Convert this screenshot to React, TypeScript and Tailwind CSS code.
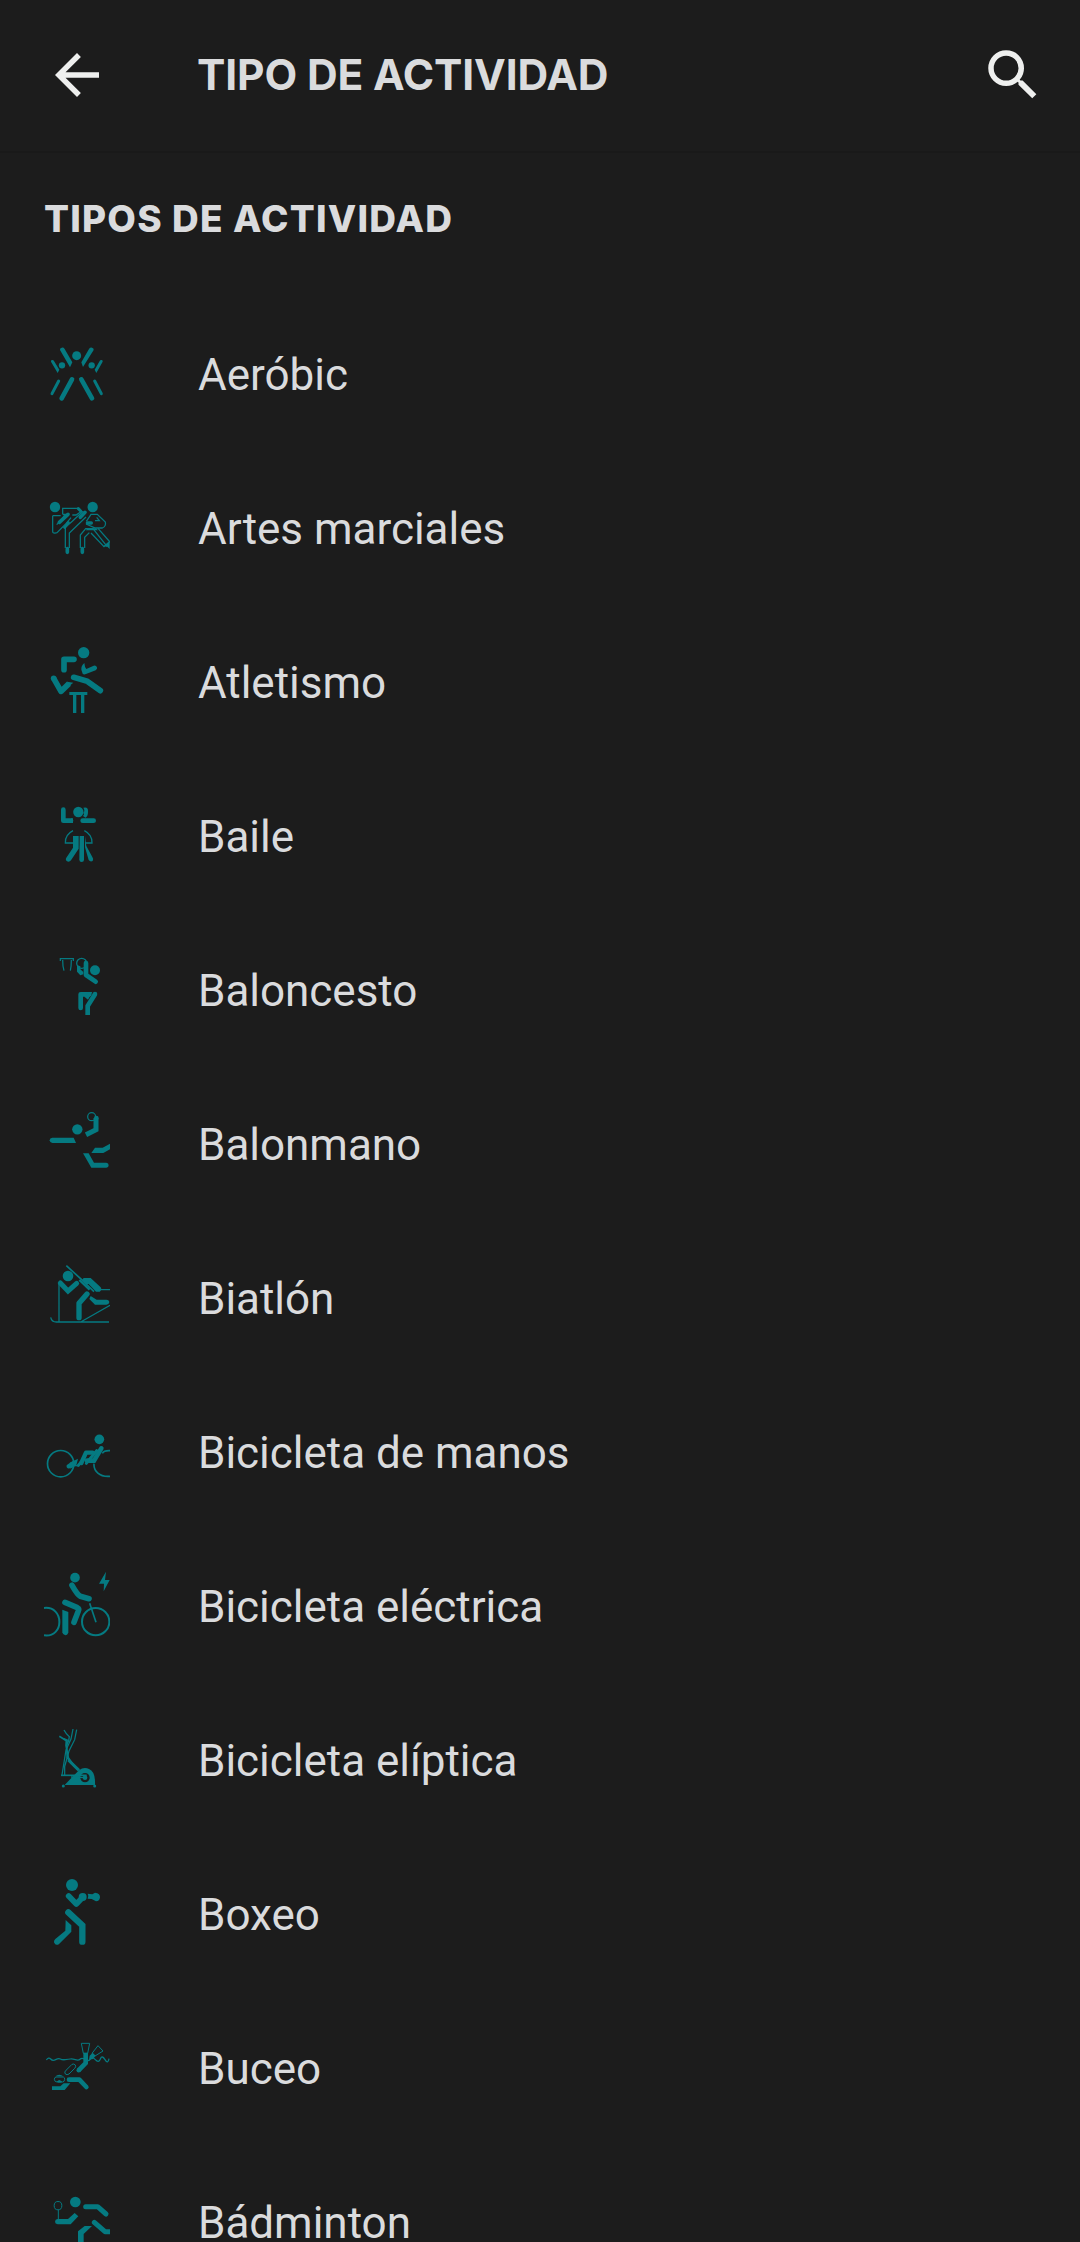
import type { ReactNode } from "react";

type Activity = { name: string; viewBox: string; icon: ReactNode };

const thick = { fill: "none", stroke: "currentColor", strokeWidth: 14, strokeLinecap: "round", strokeLinejoin: "round" } as const;
const limb = { ...thick, strokeWidth: 17 } as const;
const thin = { fill: "none", stroke: "currentColor", strokeWidth: 3.8 } as const;
const butt = { ...thick, strokeLinecap: "butt", strokeLinejoin: "miter" } as const;

const activities: Activity[] = [
  {
    name: "Aeróbic",
    viewBox: "42 42 198 198",
    icon: (
      <>
        <circle cx="140" cy="92" r="13.5" />
        <circle cx="96" cy="121" r="9.5" />
        <circle cx="185" cy="121" r="9.5" />
        <path d="M90 75Q89 69 95 68Q101 67 104 72L127 112L120 127Z" />
        <path d="M191 75Q192 69 186 68Q180 67 177 72L154 112L159 126Z" />
        <path d="M63 110Q62 106 66 105Q70 104 72 108L88 134L83 144Z" />
        <path d="M218 110Q219 106 215 105Q211 104 209 108L194 134L199 144Z" />
        <path d="M126 163L95 220M154 163L186 220" {...thick} />
        <path d="M86 168L66 206M194 168L214 206" {...thick} strokeWidth="9" />
      </>
    ),
  },
  {
    name: "Artes marciales",
    viewBox: "24 39 198 198",
    icon: (
      <>
        <circle cx="57" cy="81" r="15.5" />
        <circle cx="170" cy="81" r="15.5" />
        <path d="M50 107V154Q50 160 57 159L63 158L90 131L105 113M50 107H74M62 134L80 115L87 103" {...thin} />
        <path d="M80 103V85H127M80 103H92M109 105H120L137 94" {...thin} />
        <path d="M88 142V204M100 204V159L150 111M88 142L109 124L141 94" {...thin} />
        <path d="M133 204V165L149 146H171L213 199M146 204V172L160 158M165 159L204 200L220 186V184L186 145" {...thin} />
        <path d="M151 124L165 103H184L208 126Q211 139 199 144H178L150 132M177 122H190L182 112" {...thin} />
        <path d="M70 127L96 103M147 97L133 112" {...thick} strokeWidth="11" />
        <path d="M97 128L86 142M127 86L134 93" {...thick} strokeWidth="9" />
        <path d="M154 129H166" {...thick} strokeWidth="10" />
        <path d="M94 206V217M139 206V217" {...thick} strokeWidth="11" />
        <path d="M155 145H180L186 151H149ZM202 199L221 183V207L214 200Z" />
      </>
    ),
  },
  {
    name: "Atletismo",
    viewBox: "24 36 198 198",
    icon: (
      <>
        <circle cx="143" cy="53" r="17" />
        <path d="M114 73H84V104" {...limb} />
        <path d="M145 84Q135 92 136 104L140 116Q143 120 150 117L179 106Q185 102 183 97Q180 90 173 92L151 102Q146 96 145 84Z" />
        <path d="M113 127L154 139L193 167" {...limb} />
        <path d="M53 130L75 169L99 146" {...limb} strokeLinecap="butt" />
        <circle cx="53" cy="130" r="8.5" />
        <path d="M93 140L112 143L99 154Z" />
        <path d="M100 171H154V180H145V234H135V180H121V234H111V180H100Z" />
      </>
    ),
  },
  {
    name: "Baile",
    viewBox: "24 33 198 198",
    icon: (
      <>
        <circle cx="127" cy="66" r="15.5" />
        <path d="M82 59V92H105" {...thick} />
        <path d="M105 85H111V99H105Z" />
        <path d="M140 92H173" {...thick} />
        <path d="M142 53Q157 49 156 64Q157 78 149 83L141 78Q147 73 142 68Q148 62 142 53Z" />
        <path d="M111 122Q87 134 88 159H111M145 122Q169 134 168 159H147" {...thin} />
        <path d="M111 138H128V176L105 211Q99 218 92 213Q87 209 92 202L111 173Z" />
        <path d="M131 138H144V209Q144 216 137 216Q130 216 130 209Z" />
        <path d="M147 138V172L158 210Q163 217 170 213Q174 208 169 201L151 168Z" />
      </>
    ),
  },
  {
    name: "Baloncesto",
    viewBox: "24 495 198 198",
    icon: (
      <>
        <path d="M73 513V506H112V513M80 510Q80 530 84 542M106 510Q106 530 103 542" {...thin} />
        <circle cx="137" cy="520" r="15" {...thin} />
        <circle cx="177" cy="541" r="15" />
        <path d="M150 519V555L179 575" {...thick} />
        <path d="M123 525L133 529V538L142 546V553L133 556L123 545Z" />
        <path d="M134 654V613H160" {...thick} />
        <path d="M158 606H169L156 629L145 620Z" />
        <path d="M177 613L155 648V675" {...thick} strokeLinecap="butt" />
        <circle cx="177" cy="612" r="7" />
      </>
    ),
  },
  {
    name: "Balonmano",
    viewBox: "24 42 198 198",
    icon: (
      <>
        <circle cx="124" cy="103" r="15.5" />
        <circle cx="167" cy="65" r="12" {...thin} />
        <path d="M49 128H113L120 144H49Q41 143 41 136Q41 129 49 128Z" />
        <path d="M180 69V104L150 119" {...butt} strokeWidth="15" />
        <circle cx="181" cy="69" r="7" />
        <path d="M141 175H158L174 203H211Q218 204 218 211Q218 218 211 218H166Z" />
        <path d="M177 158H200L222 146V163L202 174H166Z" />
      </>
    ),
  },
  {
    name: "Biatlón",
    viewBox: "24 39 198 198",
    icon: (
      <>
        <circle cx="96" cy="78" r="16" />
        <path d="M73 99L96 123L122 100" {...limb} strokeWidth="15" strokeLinejoin="miter" />
        <path d="M91 47L137 89L174 125" {...thin} strokeWidth="5" />
        <path d="M130 90L161 119" {...thin} strokeWidth="7" />
        <path d="M143 84H164L194 112Q199 120 191 125H180L158 102H150L138 90Z" />
        <path d="M153 132L129 160V203" {...limb} strokeWidth="16" />
        <path d="M164 138L182 149H211Q220 150 220 157Q219 164 211 164H177L160 147Z" />
        <path d="M69 100V216M44 202Q47 216 61 216H219M134 216L222 166M194 119H222" {...thin} />
      </>
    ),
  },
  {
    name: "Bicicleta de manos",
    viewBox: "24 501 198 198",
    icon: (
      <>
        <circle cx="74" cy="641" r="39.5" {...thin} strokeWidth="5" />
        <path d="M222 602Q204 601 199 610M174 641C172 663 191 682 222 679" {...thin} strokeWidth="5" />
        <circle cx="190" cy="568" r="14.5" />
        <path d="M196 595L174 632H153" {...thick} strokeLinejoin="miter" />
        <path d="M136 639L150 608H170" {...thick} strokeWidth="13" />
        <path d="M98 649L112 640" {...thick} strokeWidth="13" />
        <path d="M101 638L126 626L121 646L103 656Z" />
        <path d="M182 602L164 624L151 640M127 646L138 634" {...thick} strokeWidth="9" />
        <path d="M111 647H130" {...thin} />
      </>
    ),
  },
  {
    name: "Bicicleta eléctrica",
    viewBox: "24 33 198 198",
    icon: (
      <>
        <circle cx="117" cy="53" r="14.5" />
        <path d="M108 76Q124 104 133 109L159 116" {...limb} />
        <path d="M87 127L124 143Q130 146 127 153L114 187" {...limb} />
        <path d="M79 149L97 156V217Q95 226 88 226Q80 225 79 217Z" />
        <circle cx="179" cy="185" r="41" {...thin} strokeWidth="6" />
        <path d="M161 130L180 187" {...thin} strokeWidth="5" />
        <path d="M24 144C85 137 86 234 24 226" {...thin} strokeWidth="6" />
        <path d="M210 35L189 71H204L203 94L221 60H207Z" />
      </>
    ),
  },
  {
    name: "Bicicleta elíptica",
    viewBox: "24 30 198 198",
    icon: (
      <>
        <path d="M84 45Q90 57 100 65L97 82M111 42L105 72L90 105L78 180M122 44L116 74L99 108L86 155V180" {...thin} />
        <path d="M70 64L91 77L90 91L97 128L115 154" {...thin} strokeWidth="5" />
        <path d="M82 70L96 76L93 92M92 85L93 128L124 163" {...thin} strokeWidth="4" />
        <path d="M86 210L103 192L129 166Q144 154 159 162Q179 170 177 210ZM147 174A14 14 0 1 0 147 202A14 14 0 1 0 147 174Z" fillRule="evenodd" />
        <circle cx="147" cy="188" r="7" />
        <path d="M97 135L129 166" {...thin} strokeWidth="9" />
        <path d="M75 181H152" {...thin} strokeWidth="5" />
        <path d="M105 186L147 188" {...thin} />
        <circle cx="82" cy="213" r="4.5" />
        <circle cx="176" cy="213" r="4.5" />
      </>
    ),
  },
  {
    name: "Boxeo",
    viewBox: "24 492 198 198",
    icon: (
      <>
        <circle cx="108" cy="510" r="18" />
        <path d="M98 543L121 567L140 547" {...limb} />
        <circle cx="140" cy="546" r="12" />
        <path d="M155 536L169 538L177 533Q193 535 192 547Q191 559 180 559L167 552L155 551Q159 543 155 536Z" />
        <path d="M97 592L139 631V680" {...limb} strokeWidth="19" strokeLinejoin="miter" />
        <path d="M89 615L106 631V650L70 686Q61 694 55 684Q52 678 58 672L88 647Z" />
      </>
    ),
  },
  {
    name: "Buceo",
    viewBox: "24 39 198 198",
    icon: (
      <>
        <path d="M31 120Q38 110 44 117T59 119T73 117T88 119T103 117T118 119T133 117T148 119T163 117T178 119T193 117T207 119T219 116" {...thin} />
        <path d="M136 70H161L155 100H142ZM186 77L201 93L177 108L168 100Z" {...thin} strokeWidth="3" />
        <path d="M149 98V129L127 152" {...thick} strokeLinejoin="miter" strokeLinecap="butt" />
        <circle cx="128" cy="151" r="6.5" />
        <path d="M159 119L161 107L170 98L179 107L171 117ZM155 122L163 114L167 118Z" />
        <path d="M91 150L108 133Q114 130 118 135Q121 141 116 145L99 162Q93 166 88 162Q83 156 91 150Z" {...thin} strokeWidth="3" />
        <path d="M58 169Q70 159 82 169Z" />
        <path d="M60 171H82Q86 172 86 178Q85 186 80 186H77L70 182L63 186Q56 186 55 178Q55 172 60 171Z" {...thin} strokeWidth="3" />
        <path d="M63 184L70 181L78 184L76 188H65Z" />
        <path d="M99 179H130L151 201" {...thick} />
        <path d="M48 199H73L83 190H103L86 210H48Z" />
      </>
    ),
  },
  {
    name: "Bádminton",
    viewBox: "24 501 198 198",
    icon: (
      <>
        <circle cx="118" cy="546" r="16" />
        <ellipse cx="66" cy="557" rx="11.5" ry="12.5" {...thin} strokeWidth="3" />
        <path d="M67 570V600" {...thin} strokeWidth="3" />
        <path d="M65 597H96L116 579L127 589L104 613H65Q57 611 57 605Q57 598 65 597Z" />
        <path d="M149 560H185L210 582" {...limb} strokeWidth="15" />
        <path d="M175 607L207 635H222" {...limb} strokeWidth="15" />
        <path d="M126 690V634L146 618H168L143 642V690Z" />
      </>
    ),
  },
];

export default function App() {
  return (
    <div className="flex h-[2242px] w-full flex-col overflow-hidden bg-[#1c1c1c] text-[#dadbdd]">
      <header className="flex h-[153px] shrink-0 items-start border-b-2 border-[#191919] pl-[44px] pr-[34px] pt-[42px]">
        <button type="button" aria-label="Volver" className="size-[66px] shrink-0">
          <svg viewBox="0 0 24 24" className="size-full fill-[#eeefee]">
            <path d="M20 11H7.83l5.59-5.59L12 4l-8 8 8 8 1.41-1.41L7.83 13H20z" />
          </svg>
        </button>
        <h1 className="ml-[87px] h-[66px] flex-1 whitespace-nowrap font-['Inter',sans-serif] text-[42.5px] leading-[66px] font-bold tracking-[-0.15px]">
          TIPO DE ACTIVIDAD
        </h1>
        <button type="button" aria-label="Buscar" className="size-[66px] shrink-0">
          <svg viewBox="0 0 24 24" className="size-full fill-[#eeefee]">
            <path d="M15.5 14h-.79l-.28-.27A6.47 6.47 0 0 0 16 9.5 6.5 6.5 0 1 0 9.5 16c1.61 0 3.09-.59 4.23-1.57l.27.28v.79l5 4.99L20.49 19zm-6 0A4.5 4.5 0 1 1 14 9.5 4.5 4.5 0 0 1 9.5 14z" />
          </svg>
        </button>
      </header>
      <main className="shrink-0">
        <h2 className="flex h-[145px] items-start whitespace-nowrap pl-[44px] pt-[41px] font-['Inter',sans-serif] text-[37px] leading-[50px] font-extrabold tracking-[1.2px]">
          TIPOS DE ACTIVIDAD
        </h2>
        <ul>
          {activities.map(({ name, viewBox, icon }) => (
            <li key={name} className="flex h-[154px] items-start pl-[44px] pt-[41px]">
              <svg viewBox={viewBox} className="size-[66px] shrink-0 overflow-hidden fill-current text-[#057a81]">
                {icon}
              </svg>
              <span className="ml-[88px] whitespace-nowrap pt-[3px] font-['Roboto',sans-serif] text-[44px] leading-[66px] tracking-[-0.02px]">
                {name}
              </span>
            </li>
          ))}
        </ul>
      </main>
    </div>
  );
}
